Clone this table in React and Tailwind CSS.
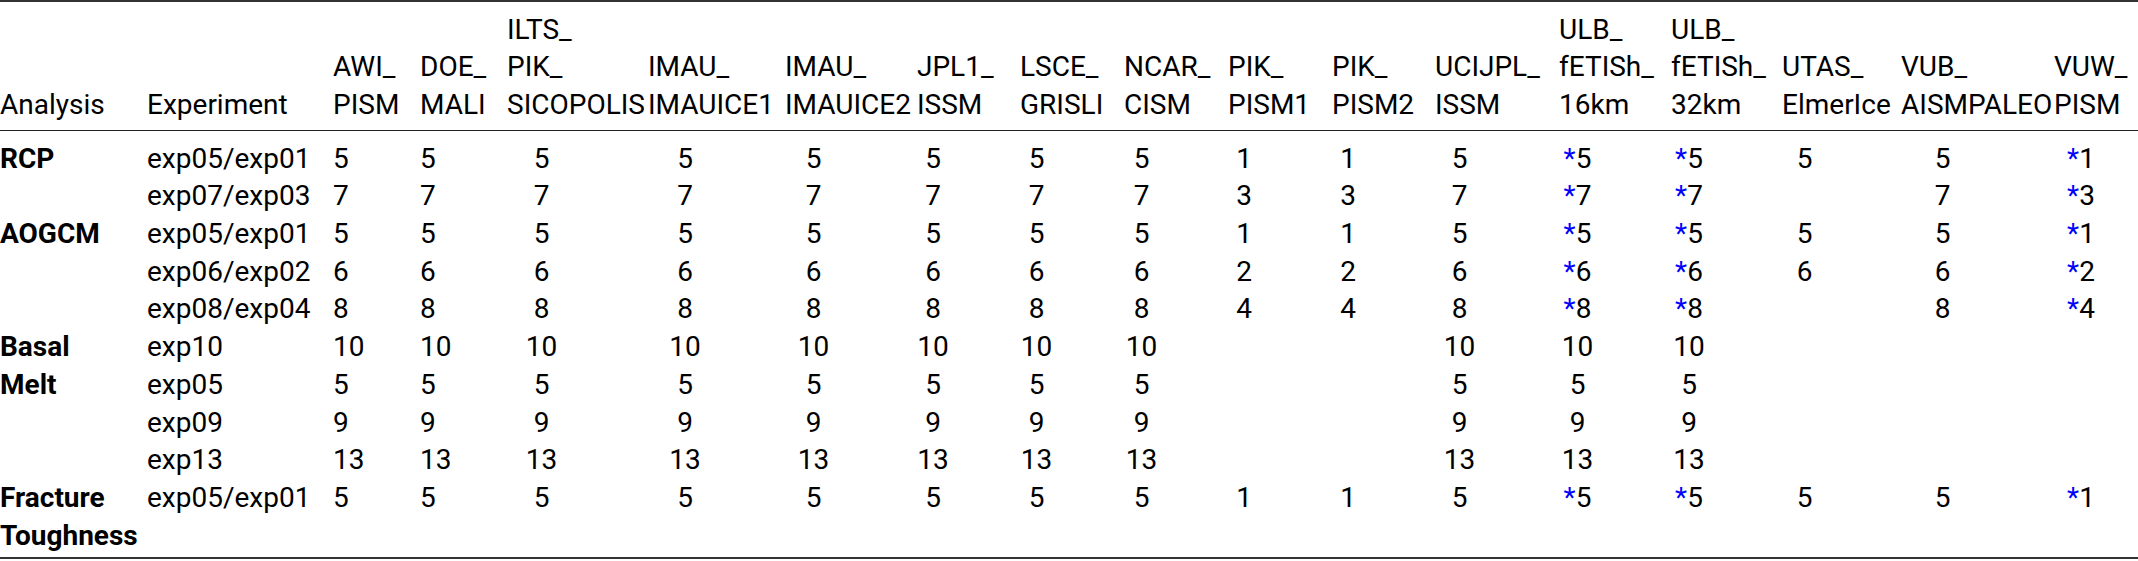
import React from "react";

const GRID =
  "grid grid-cols-[147px_186px_87px_87px_141px_137px_132px_103px_104px_104px_104px_103px_124px_112px_111px_119px_153px_84px]";

const cols = [
  { h: ["AWI_", "PISM"], cls: "pl-0", box: "" },
  { h: ["DOE_", "MALI"], cls: "pl-0", box: "" },
  { h: ["ILTS_", "PIK_", "SICOPOLIS"], cls: "pl-[18.5px]", box: "w-[32px] text-center" },
  { h: ["IMAU_", "IMAUICE1"], cls: "pl-[21px]", box: "w-[32px] text-center" },
  { h: ["IMAU_", "IMAUICE2"], cls: "pl-[12.5px]", box: "w-[32px] text-center" },
  { h: ["JPL1_", "ISSM"], cls: "pl-0", box: "w-[32px] text-center" },
  { h: ["LSCE_", "GRISLI"], cls: "pl-[0.5px]", box: "w-[32px] text-center" },
  { h: ["NCAR_", "CISM"], cls: "pl-[1.5px]", box: "w-[32px] text-center" },
  { h: ["PIK_", "PISM1"], cls: "pl-0", box: "w-[32px] text-center" },
  { h: ["PIK_", "PISM2"], cls: "pl-0", box: "w-[32px] text-center" },
  { h: ["UCIJPL_", "ISSM"], cls: "pl-[8.5px]", box: "w-[32px] text-center" },
  { h: ["ULB_", "fETISh_", "16km"], cls: "pl-[2.5px]", box: "w-[32px] text-center" },
  { h: ["ULB_", "fETISh_", "32km"], cls: "pl-[2px]", box: "w-[32px] text-center" },
  { h: ["UTAS_", "ElmerIce"], cls: "pl-[6.5px]", box: "w-[32px] text-center" },
  { h: ["VUB_", "AISMPALEO"], cls: "pl-[25.5px]", box: "w-[32px] text-center" },
  { h: ["VUW_", "PISM"], cls: "pl-[11px]", box: "w-[32px] text-center" },
];

const rep = (v, n) => Array.from({ length: n }, () => v);

const r5 = [...rep("5", 8), "1", "1", "5", "*5", "*5", "5", "5", "*1"];
const r7 = [...rep("7", 8), "3", "3", "7", "*7", "*7", "", "7", "*3"];
const r6 = [...rep("6", 8), "2", "2", "6", "*6", "*6", "6", "6", "*2"];
const r8 = [...rep("8", 8), "4", "4", "8", "*8", "*8", "", "8", "*4"];
const bm = (v) => [...rep(v, 8), "", "", v, v, v, "", "", ""];

const groups = [
  {
    label: ["RCP"],
    span: "row-span-2",
    rows: [
      ["exp05/exp01", r5],
      ["exp07/exp03", r7],
    ],
  },
  {
    label: ["AOGCM"],
    span: "row-span-3",
    rows: [
      ["exp05/exp01", r5],
      ["exp06/exp02", r6],
      ["exp08/exp04", r8],
    ],
  },
  {
    label: ["Basal", "Melt"],
    span: "row-span-4",
    rows: [
      ["exp10", bm("10")],
      ["exp05", bm("5")],
      ["exp09", bm("9")],
      ["exp13", bm("13")],
    ],
  },
  {
    label: ["Fracture", "Toughness"],
    span: "row-span-1",
    rows: [["exp05/exp01", r5]],
  },
];

function Val({ v }) {
  if (!v) return null;
  if (v.startsWith("*")) {
    return (
      <>
        <span className="text-[#0000ff]">*</span>
        {v.slice(1)}
      </>
    );
  }
  return v;
}

export default function App() {
  return (
    <div className="w-[2138px] bg-white text-black font-['Roboto',sans-serif] text-[28px] leading-[37.7px]">
      <div
        className={`${GRID} items-end border-t-2 border-t-[#333333] border-b border-b-[#222222] pt-[8.6px] pb-[6.3px]`}
      >
        <div className="whitespace-nowrap">Analysis</div>
        <div className="whitespace-nowrap">Experiment</div>
        {cols.map((c, i) => (
          <div key={i} className="whitespace-nowrap">
            {c.h.map((t, j) => (
              <div key={j}>{t}</div>
            ))}
          </div>
        ))}
      </div>
      <div
        className={`${GRID} border-b-2 border-b-[#333333] pt-[8.6px] pb-[2.5px]`}
      >
        {groups.map((g, gi) => (
          <React.Fragment key={gi}>
            {g.rows.map(([exp, vals], ri) => (
              <React.Fragment key={ri}>
                {ri === 0 && (
                  <div className={`${g.span} font-bold whitespace-nowrap`}>
                    {g.label.map((l, li) => (
                      <div key={li}>{l}</div>
                    ))}
                  </div>
                )}
                <div className="whitespace-nowrap">{exp}</div>
                {vals.map((v, vi) => (
                  <div key={vi} className={`${cols[vi].cls} whitespace-nowrap`}>
                    <span className={`inline-block ${cols[vi].box}`}>
                      <Val v={v} />
                    </span>
                  </div>
                ))}
              </React.Fragment>
            ))}
          </React.Fragment>
        ))}
      </div>
    </div>
  );
}
